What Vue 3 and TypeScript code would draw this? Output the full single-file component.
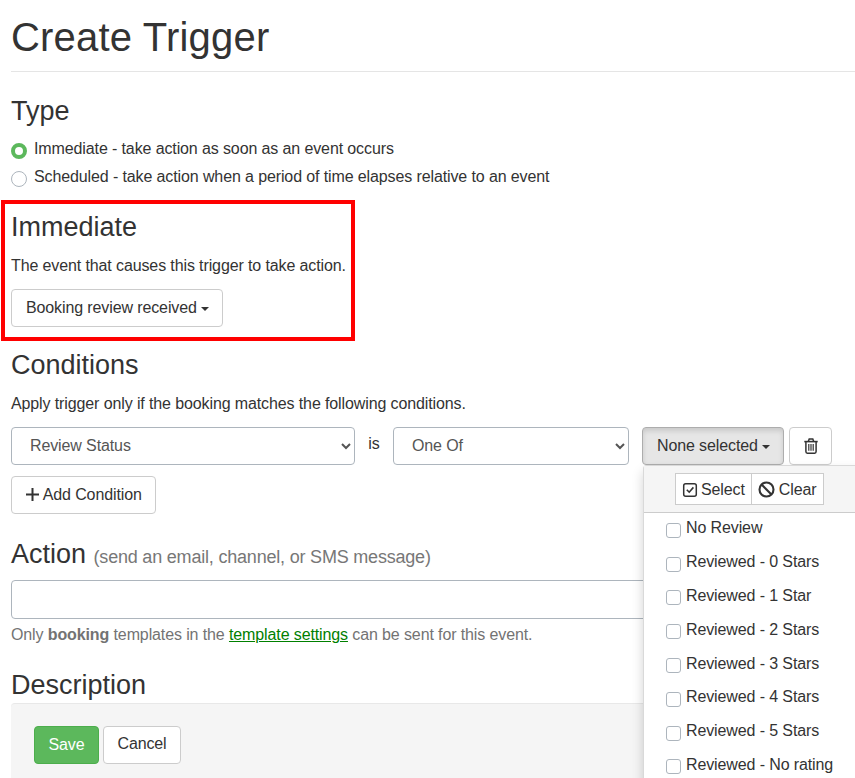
<template>
  <div class="page">
    <h1 class="page-title">Create Trigger</h1>

    <h2 class="section-title type-title">Type</h2>
    <label class="radio-row">
      <input type="radio" name="type" class="radio" checked />
      Immediate - take action as soon as an event occurs
    </label>
    <label class="radio-row">
      <input type="radio" name="type" class="radio" />
      Scheduled - take action when a period of time elapses relative to an event
    </label>

    <!-- Immediate, marked with the red box -->
    <section class="highlight">
      <h2 class="section-title">Immediate</h2>
      <p class="section-sub">The event that causes this trigger to take action.</p>
      <button type="button" class="btn btn-event">Booking review received <span class="caret"></span></button>
    </section>

    <!-- Conditions -->
    <h2 class="section-title conditions-title">Conditions</h2>
    <p class="section-sub">Apply trigger only if the booking matches the following conditions.</p>
    <div class="condition-row">
      <select class="field-select select-status">
        <option>Review Status</option>
      </select>
      <span class="is-label">is</span>
      <select class="field-select select-op">
        <option>One Of</option>
      </select>
      <div class="multi">
        <button type="button" class="btn btn-open">None selected <span class="caret"></span></button>
        <div class="menu">
          <div class="menu-head">
            <div class="btn-group">
              <button type="button" class="btn-mini">
                <svg width="16" height="16" viewBox="0 0 16 16" fill="none" stroke="currentColor">
                  <rect x="1.7" y="1.7" width="12.6" height="12.6" rx="2" stroke-width="1.5" />
                  <path d="M4.8 7.8 7.2 10.2 11.4 5.4" stroke-width="1.6" />
                </svg>
                Select
              </button>
              <button type="button" class="btn-mini">
                <svg width="17" height="17" viewBox="0 0 17 17" fill="none" stroke="currentColor" stroke-width="2.1">
                  <circle cx="8.5" cy="8.5" r="7" />
                  <line x1="3.6" y1="3.6" x2="13.4" y2="13.4" />
                </svg>
                Clear
              </button>
            </div>
          </div>
          <div class="menu-list">
            <label v-for="opt in reviewOptions" :key="opt" class="menu-item">
              <input type="checkbox" class="check" />
              {{ opt }}
            </label>
          </div>
        </div>
      </div>
      <button type="button" class="btn btn-trash" aria-label="Delete">
        <svg width="14" height="16" viewBox="0 0 14 16" fill="none" stroke="#333">
          <path d="M0.3 3.6H13.7" stroke-width="1.6" />
          <path d="M4.4 3.2 5.2 1H8.8L9.6 3.2" stroke-width="1.5" />
          <path d="M1.9 3.6V13.6C1.9 14.6 2.5 15.2 3.3 15.2H10.7C11.5 15.2 12.1 14.6 12.1 13.6V3.6" stroke-width="1.5" />
          <path d="M4.8 6V12.8M7 6V12.8M9.2 6V12.8" stroke-width="1.2" />
        </svg>
      </button>
    </div>
    <button type="button" class="btn btn-add">
      <svg class="plus" width="13" height="13" viewBox="0 0 13 13" stroke="#333" stroke-width="2">
        <path d="M6.5 0V13M0 6.5H13" />
      </svg>
      Add Condition
    </button>

    <!-- Action -->
    <h2 class="section-title action-title">Action <small>(send an email, channel, or SMS message)</small></h2>
    <input type="text" class="field-input" />
    <p class="help">Only <b>booking</b> templates in the <a href="#" class="link">template settings</a> can be sent for this event.</p>

    <!-- Description -->
    <h2 class="section-title desc-title">Description</h2>
    <div class="form-actions">
      <button type="button" class="btn btn-save">Save</button>
      <button type="button" class="btn btn-cancel">Cancel</button>
    </div>
  </div>
</template>

<script setup lang="ts">
const reviewOptions: string[] = [
  'No Review',
  'Reviewed - 0 Stars',
  'Reviewed - 1 Star',
  'Reviewed - 2 Stars',
  'Reviewed - 3 Stars',
  'Reviewed - 4 Stars',
  'Reviewed - 5 Stars',
  'Reviewed - No rating',
]
</script>

<style>
html, body { margin: 0; background: #fff; overflow: hidden; }
</style>

<style scoped>
.page {
  width: 855px;
  height: 778px;
  overflow: hidden;
  box-sizing: border-box;
  padding: 0 0 0 11px;
  font-family: "Liberation Sans", Arial, sans-serif;
  font-size: 16px;
  line-height: 1.43;
  letter-spacing: -0.115px;
  color: #333;
  background: #fff;
}

.page-title {
  margin: 0;
  padding: 12px 0 9px;
  font-size: 40px;
  line-height: 50px;
  font-weight: 400;
  letter-spacing: 0.2px;
  border-bottom: 1px solid #e5e5e5;
}

.section-title {
  margin: 0;
  font-size: 27px;
  line-height: 31px;
  font-weight: 400;
  letter-spacing: 0;
}
.section-title small { font-size: 18px; letter-spacing: -0.2px; color: #777; }

.type-title { margin-top: 24px; }

.radio-row {
  display: flex;
  align-items: center;
  gap: 7px;
  height: 28px;
  white-space: nowrap;
}
.type-title + .radio-row { margin-top: 8px; }

.radio {
  appearance: none;
  width: 16px;
  height: 16px;
  margin: 3px 0 0;
  box-sizing: border-box;
  border: 1px solid #adb5bd;
  border-radius: 50%;
  background: #fff;
}
.radio:checked { border: 4.5px solid #5cb85c; }

.highlight {
  box-sizing: border-box;
  width: 354px;
  height: 141px;
  margin: 9px 0 0 -10px;
  padding: 8px 0 0 6px;
  border: 4px solid #f00;
}

.section-sub {
  margin: 13px 0 0;
  line-height: 20px;
  white-space: nowrap;
}
.highlight .section-sub { margin-bottom: 13px; }

.btn {
  display: inline-block;
  box-sizing: border-box;
  height: 38px;
  padding: 0 14px;
  font-family: inherit;
  font-size: 16px;
  letter-spacing: -0.115px;
  color: #333;
  background: #fff;
  border: 1px solid #ccc;
  border-radius: 4px;
  white-space: nowrap;
}
.btn-event { padding-right: 13px; }

.caret {
  display: inline-block;
  width: 0;
  height: 0;
  vertical-align: middle;
  border-top: 4px solid #333;
  border-left: 4px solid transparent;
  border-right: 4px solid transparent;
}

.conditions-title { margin-top: 9px; }

.condition-row {
  display: flex;
  align-items: center;
  margin-top: 13px;
}

.field-select {
  box-sizing: border-box;
  height: 38px;
  padding: 0 14px 2px;
  font-family: inherit;
  font-size: 16px;
  letter-spacing: -0.115px;
  color: #555;
  background-color: #fff;
  border: 1px solid #adb5bd;
  border-radius: 4px;
}
.select-status { width: 344px; }
.select-op { width: 236px; }

.is-label { width: 38px; text-align: center; margin-top: -3px; }

.multi { position: relative; margin-left: 13px; }

.btn-open {
  width: 142px;
  background: #e6e6e6;
  border-color: #adadad;
  box-shadow: inset 0 3px 5px rgba(0, 0, 0, 0.125);
}

.menu {
  position: absolute;
  top: 38px;
  left: 1px;
  width: 290px;
  height: 330px;
  background: #fff;
  border: 1px solid rgba(0, 0, 0, 0.15);
  border-radius: 4px 0 0 0;
  box-shadow: 0 6px 12px rgba(0, 0, 0, 0.175);
  box-sizing: border-box;
}

.menu-head {
  box-sizing: border-box;
  height: 47px;
  padding: 7px 0 0 31px;
  background: #f5f5f5;
  border-bottom: 1px solid #ccc;
}

.btn-group { display: flex; }

.btn-mini {
  display: flex;
  align-items: center;
  gap: 3px;
  box-sizing: border-box;
  height: 32px;
  padding: 1px 6px 0;
  font-family: inherit;
  font-size: 16px;
  letter-spacing: -0.115px;
  color: #333;
  background: #fff;
  border: 1px solid #ccc;
}
.btn-mini + .btn-mini { margin-left: -1px; gap: 4px; padding-right: 7px; }

.menu-list { margin-top: -1px; }

.menu-item {
  display: flex;
  align-items: center;
  gap: 5px;
  height: 33.8px;
  padding-left: 22px;
  color: #333;
  white-space: nowrap;
}

.check {
  appearance: none;
  width: 15px;
  height: 15px;
  margin: 3px 0 0;
  box-sizing: border-box;
  border: 1px solid #adb5bd;
  border-radius: 3px;
  background: #fff;
}

.btn-trash {
  display: flex;
  align-items: center;
  justify-content: center;
  width: 43px;
  padding: 0;
  margin-left: 5px;
}

.btn-add {
  display: block;
  width: 145px;
  margin-top: 11px;
  padding: 0;
}
.plus { vertical-align: -1px; margin-left: 1px; }

.action-title { margin-top: 25px; }

.field-input {
  display: block;
  box-sizing: border-box;
  width: 840px;
  height: 39px;
  margin-top: 7px;
  background: #fff;
  border: 1px solid #adb5bd;
  border-radius: 4px;
}

.help { margin: 6px 0 0; line-height: 20px; color: #737373; white-space: nowrap; }
.link { color: #008000; text-decoration: underline; }

.desc-title { margin-top: 25px; }

.form-actions {
  display: flex;
  gap: 4px;
  width: 850px;
  height: 100px;
  margin-top: 2px;
  padding: 22px 23px;
  box-sizing: border-box;
  background: #f5f5f5;
  border-top: 1px solid #e8e8e8;
  border-radius: 4px 0 0 0;
}
.btn-save { width: 65px; padding: 0; color: #fff; background: #5cb85c; border-color: #4cae4c; }
.btn-cancel { width: 78px; padding: 0 0 2px; }
</style>
